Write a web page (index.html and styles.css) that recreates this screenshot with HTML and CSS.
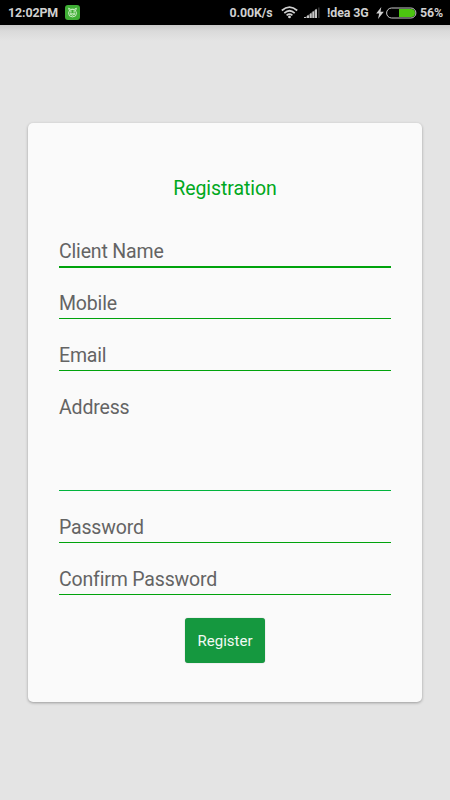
FILE: index.html
```html
<!DOCTYPE html>
<html lang="en">
<head>
<meta charset="utf-8">
<title>Registration</title>
<link rel="stylesheet" href="styles.css">
</head>
<body>
<header class="status">
  <span class="clock">12:02PM</span>
  <svg class="app" width="15" height="15" viewBox="0 0 15 15"><rect width="15" height="15" rx="3" fill="#3fae35"/><g fill="none" stroke="#d9f3d3" stroke-width=".9"><path d="M4.3 5.4 3.6 3.2 5.8 4.4Q7.5 3.8 9.2 4.4L11.4 3.2 10.7 5.4"/><ellipse cx="7.5" cy="8.2" rx="4" ry="3.7"/><path d="M4.8 8.8Q7.5 11.8 10.2 8.8z"/></g><path d="M5.2 6.2h1.3v1.2H5.2zM8.5 6.2h1.3v1.2H8.5z" fill="#d9f3d3"/></svg>
  <span class="speed">0.00K/s</span>
  <svg class="wifi" width="17" height="13" viewBox="0 0 17 13"><g fill="none" stroke="#d0d0d0" stroke-width="1.7"><path d="M.8 4.5Q8.5-2.3 16.2 4.5"/><path d="M3.3 7.1Q8.5 2.4 13.7 7.1"/><path d="M5.6 9.4Q8.5 6.9 11.4 9.4"/></g><circle cx="8.5" cy="10.9" r="1.4" fill="#d0d0d0"/></svg>
  <svg class="signal" width="16" height="11" viewBox="0 0 16 11"><path d="M0 11 13 1.5V11z" fill="#5c5c5c"/><path d="M0 10h2v1H0zM3 8.6h2V11H3zM6 6.4h1.6V11H6zM8.5 4.6h1.6V11H8.5zM11 2.6h2V11h-2z" fill="#c6c6c6"/><path d="M14 .5h1.6V11H14z" fill="#333"/></svg>
  <span class="carrier">!dea 3G</span>
  <svg class="bolt" width="8" height="12" viewBox="0 0 8 12"><path d="M5.3 0 .2 6.5h3L2 12l5.8-7.2H4.5z" fill="#d0d0d0"/></svg>
  <svg class="battery" width="31" height="12" viewBox="0 0 31 12"><rect x=".6" y="1" width="29.3" height="10" rx="5" fill="#000" stroke="#c9c9c9"/><path d="M13 2h12a4 4 0 0 1 0 8H13z" fill="#4cc510"/></svg>
  <span class="percent">56%</span>
</header>
<main class="screen">
  <form class="card">
    <h1 class="title">Registration</h1>
    <label class="field focused"><span class="label">Client Name</span></label>
    <label class="field"><span class="label">Mobile</span></label>
    <label class="field"><span class="label">Email</span></label>
    <label class="field address"><span class="label">Address</span></label>
    <label class="field"><span class="label">Password</span></label>
    <label class="field"><span class="label">Confirm Password</span></label>
    <button class="register" type="button">Register</button>
  </form>
</main>
</body>
</html>
```

FILE: styles.css
```css
* { box-sizing: border-box; }
body {
  margin: 0;
  height: 800px;
  overflow: hidden;
  background: #e4e4e4;
  font-family: Roboto, "Liberation Sans", sans-serif;
}
.status {
  display: flex;
  align-items: center;
  height: 25px;
  padding-left: 8px;
  background: #000;
  color: #d0d0d0;
  font-size: 12.4px;
  font-weight: 700;
  letter-spacing: -.1px;
  white-space: nowrap;
}
.status svg,
.status span { flex: none; }
.clock { width: 57px; }
.speed { width: 51px; margin-left: 149.5px; }
.signal { margin-left: 6.5px; }
.carrier { width: 49px; margin-left: 7px; }
.battery { margin-left: 2px; }
.percent { margin-left: 3px; }
.screen {
  height: 775px;
  padding: 98px 28px 0;
  background: linear-gradient(#c9c9c9, #dadada 6px, #e4e4e4 16px);
}
.card {
  display: flex;
  flex-direction: column;
  height: 579px;
  padding: 54px 31px 0;
  border-radius: 5px;
  background: #fafafa;
  box-shadow: 0 1px 3px rgba(0, 0, 0, .32);
}
.title {
  margin: 0 0 39px;
  color: #00a820;
  font-size: 19.5px;
  font-weight: 400;
  letter-spacing: -.08px;
  line-height: 23px;
  text-align: center;
}
.field {
  flex: none;
  height: 52px;
  padding-top: 24px;
  border-bottom: 1px solid #00a30c;
  color: #646464;
  font-size: 19.5px;
  letter-spacing: -.17px;
  line-height: 26px;
}
.label { display: block; }
.focused {
  height: 29px;
  margin-bottom: -1px;
  padding-top: 0;
  border-bottom-width: 2px;
}
.address { height: 120px; border-color: #00b43c; }
.register {
  align-self: center;
  flex: none;
  width: 80px;
  height: 45px;
  margin: 23px 0 0;
  padding: 1px 0 0;
  border: 0;
  border-radius: 3px;
  background: #15983f;
  box-shadow: 0 0 1px rgba(0, 0, 0, .4);
  color: #f2faf4;
  font: 400 15px Roboto, sans-serif;
}
```
